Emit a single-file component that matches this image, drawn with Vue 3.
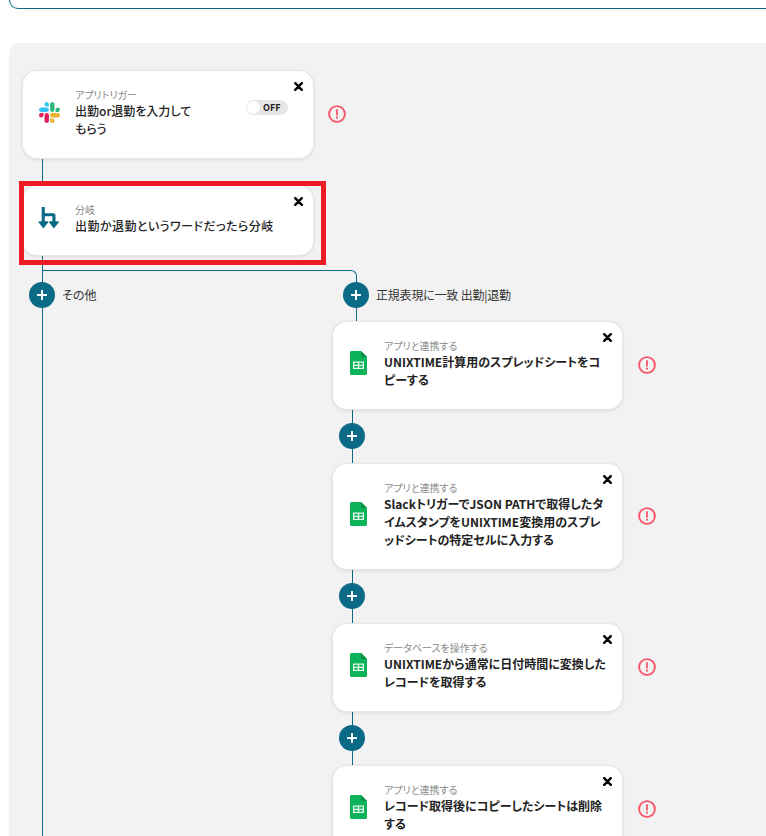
<script setup>
const triggerTitle = '出勤or退勤を入力して\nもらう'
const steps = [
  { label: 'アプリと連携する', title: 'UNIXTIME計算用のスプレッドシートをコ\nピーする' },
  { label: 'アプリと連携する', title: 'SlackトリガーでJSON PATHで取得したタ\nイムスタンプをUNIXTIME変換用のスプレ\nッドシートの特定セルに入力する' },
  { label: 'データベースを操作する', title: 'UNIXTIMEから通常に日付時間に変換した\nレコードを取得する' },
  { label: 'アプリと連携する', title: 'レコード取得後にコピーしたシートは削除\nする' }
]
</script>

<template>
  <div class="page">
    <div class="top-box"></div>
    <div class="panel">
      <div class="row">
        <div class="card">
          <div class="icon">
            <svg width="21" height="21" viewBox="0 0 122.8 122.8">
              <path d="M25.8 77.6c0 7.1-5.8 12.9-12.9 12.9S0 84.7 0 77.6s5.8-12.9 12.9-12.9h12.9v12.9z" fill="#E01E5A"/>
              <path d="M32.3 77.6c0-7.1 5.8-12.9 12.9-12.9s12.9 5.8 12.9 12.9v32.3c0 7.1-5.8 12.9-12.9 12.9s-12.9-5.8-12.9-12.9V77.6z" fill="#E01E5A"/>
              <path d="M45.2 25.8c-7.1 0-12.9-5.8-12.9-12.9S38.1 0 45.2 0s12.9 5.8 12.9 12.9v12.9H45.2z" fill="#36C5F0"/>
              <path d="M45.2 32.3c7.1 0 12.9 5.8 12.9 12.9s-5.8 12.9-12.9 12.9H12.9C5.8 58.1 0 52.3 0 45.2s5.8-12.9 12.9-12.9h32.3z" fill="#36C5F0"/>
              <path d="M97 45.2c0-7.1 5.8-12.9 12.9-12.9s12.9 5.8 12.9 12.9-5.8 12.9-12.9 12.9H97V45.2z" fill="#2EB67D"/>
              <path d="M90.5 45.2c0 7.1-5.8 12.9-12.9 12.9s-12.9-5.8-12.9-12.9V12.9C64.7 5.8 70.5 0 77.6 0s12.9 5.8 12.9 12.9v32.3z" fill="#2EB67D"/>
              <path d="M77.6 97c7.1 0 12.9 5.8 12.9 12.9s-5.8 12.9-12.9 12.9-12.9-5.8-12.9-12.9V97h12.9z" fill="#ECB22E"/>
              <path d="M77.6 90.5c-7.1 0-12.9-5.8-12.9-12.9s5.8-12.9 12.9-12.9h32.3c7.1 0 12.9 5.8 12.9 12.9s-5.8 12.9-12.9 12.9H77.6z" fill="#ECB22E"/>
            </svg>
          </div>
          <div class="text">
            <div class="label">アプリトリガー</div>
            <div class="title medium">{{ triggerTitle }}</div>
          </div>
          <div class="toggle"><span class="knob"></span><span class="off">OFF</span></div>
          <svg class="close" width="9" height="9" viewBox="0 0 9 9"><path d="M1.2 1.2l6.6 6.6M7.8 1.2L1.2 7.8" stroke="#000" stroke-width="2.4" stroke-linecap="round"/></svg>
        </div>
        <svg class="alert" width="18" height="18" viewBox="0 0 18 18"><circle cx="9" cy="9" r="7.900" fill="none" stroke="#f7566a" stroke-width="1.900"/><path d="M9 5v4.800" stroke="#f7566a" stroke-width="1.800" stroke-linecap="round"/><circle cx="9" cy="12.700" r="1.100" fill="#f7566a"/></svg>
      </div>
      <div class="line first"></div>
      <div class="card">
        <div class="icon">
          <svg width="24" height="24" viewBox="0 0 24 24" fill="#0b6a85" stroke-linejoin="round">
            <path d="M4.700 1h3.100v6.200h8.600c1.200 0 2.100.9 2.100 2.100V17h-3.100v-6.800H7.800V17H4.700z"/>
            <path d="M2.200 16h8.400l-4.200 5.400z" stroke="#0b6a85" stroke-width="1.400"/>
            <path d="M12.700 16h8.400l-4.200 5.400z" stroke="#0b6a85" stroke-width="1.400"/>
          </svg>
        </div>
        <div class="text">
          <div class="label">分岐</div>
          <div class="title medium wide">出勤か退勤というワードだったら分岐</div>
        </div>
        <svg class="close" width="9" height="9" viewBox="0 0 9 9"><path d="M1.2 1.2l6.6 6.6M7.8 1.2L1.2 7.8" stroke="#000" stroke-width="2.4" stroke-linecap="round"/></svg>
        <div class="highlight"></div>
      </div>
      <div class="line second"></div>
      <div class="branch-head"></div>
      <div class="branches">
        <div class="left-col">
          <div class="head">
            <span class="plus"></span>
            <span class="head-text">その他</span>
          </div>
          <div class="left-line"></div>
        </div>
        <div class="right-col">
          <div class="head shifted">
            <span class="plus"></span>
            <span class="head-text tight">正規表現に一致 出勤|退勤</span>
          </div>
          <div class="line to-card"></div>
          <template v-for="(s, i) in steps" :key="i">
            <div class="row">
              <div class="card step">
                <div class="icon sheet">
                  <svg width="17" height="24" viewBox="0 0 17 24">
                    <path d="M1.500 0H11l6 6v16.500a1.500 1.500 0 0 1-1.500 1.500h-14A1.500 1.500 0 0 1 0 22.500V1.500A1.500 1.500 0 0 1 1.500 0z" fill="#0cb358"/>
                    <path d="M11 0l6 6h-4.500A1.500 1.500 0 0 1 11 4.500z" fill="#0a8f47"/>
                    <path d="M3 10.500h11v7.500H3z" fill="#e6f7ed"/>
                    <path d="M4.300 11.800h3.500v1.900H4.300zM9.200 11.800h3.500v1.900H9.200zM4.300 14.900h3.500v1.900H4.300zM9.200 14.900h3.500v1.900H9.200z" fill="#0cb358"/>
                  </svg>
                </div>
                <div class="text">
                  <div class="label">{{ s.label }}</div>
                  <div class="title">{{ s.title }}</div>
                </div>
                <svg class="close" width="9" height="9" viewBox="0 0 9 9"><path d="M1.2 1.2l6.6 6.6M7.8 1.2L1.2 7.8" stroke="#000" stroke-width="2.4" stroke-linecap="round"/></svg>
              </div>
              <svg class="alert" width="18" height="18" viewBox="0 0 18 18"><circle cx="9" cy="9" r="7.900" fill="none" stroke="#f7566a" stroke-width="1.900"/><path d="M9 5v4.800" stroke="#f7566a" stroke-width="1.800" stroke-linecap="round"/><circle cx="9" cy="12.700" r="1.100" fill="#f7566a"/></svg>
            </div>
            <div v-if="i < steps.length - 1" class="connector">
              <div class="line seg-a"></div>
              <span class="plus"></span>
              <div class="line seg-b"></div>
            </div>
          </template>
        </div>
      </div>
    </div>
  </div>
</template>

<style>
html, body { margin: 0; background: #fff; overflow: hidden; }
</style>

<style scoped>
.page {
  width: 766px;
  height: 836px;
  overflow: hidden;
  background: #fff;
  font-family: "Noto Sans CJK JP", "Noto Sans", sans-serif;
  color: #222;
}
.top-box {
  height: 8px;
  margin-left: 9px;
  width: 800px;
  border: 1px solid #0b6a85;
  border-top: none;
  border-radius: 0 0 10px 10px;
  box-sizing: content-box;
}
.panel {
  margin-top: 34px;
  margin-left: 9px;
  width: 780px;
  height: 800px;
  padding: 28px 0 0 14px;
  box-sizing: border-box;
  background: #f2f2f2;
  border-radius: 10px 0 0 0;
}
.row {
  display: flex;
  align-items: center;
}
.card {
  position: relative;
  width: 290px;
  box-sizing: border-box;
  display: flex;
  align-items: center;
  padding: 16px 0 19.600px;
  background: #fff;
  border-radius: 14px;
  box-shadow: 0 0 0 1px #e6e6e6, 0 1px 4px rgba(0, 0, 0, 0.14);
}
.card.step { width: 289px; }
.icon {
  width: 52px;
  flex: none;
  display: flex;
  justify-content: center;
  margin-bottom: 1px;
}
.icon.sheet { width: 51px; padding-right: 1px; box-sizing: border-box; }
.icon svg { display: block; }
.text { flex: none; width: 228px; }
.label {
  font-size: 10px;
  line-height: 15px;
  color: #8a8a8a;
  font-feature-settings: "palt";
}
.title {
  font-size: 12px;
  line-height: 18px;
  font-weight: 700;
  color: #222;
  white-space: pre-line;
  font-feature-settings: "palt";
}
.title.medium { font-weight: 500; }
.title.wide { letter-spacing: 0.45px; }
.toggle {
  position: absolute;
  left: 223px;
  top: 29px;
  width: 42px;
  height: 15px;
  border-radius: 8px;
  background: #e6e6e6;
  display: flex;
  align-items: center;
}
.knob {
  width: 13px;
  height: 13px;
  margin-left: 1px;
  border-radius: 50%;
  background: #fff;
}
.off {
  margin-left: 3px;
  font-size: 9px;
  line-height: 15px;
  font-weight: 700;
  color: #222;
}
.close {
  position: absolute;
  right: 10px;
  top: 11px;
}
.alert {
  margin-left: 15px;
  margin-bottom: 1px;
  flex: none;
}
.card.step + .alert { margin-left: 16px; }
.highlight {
  position: absolute;
  left: -4px;
  top: -5px;
  width: 307px;
  height: 84px;
  box-sizing: border-box;
  border: 5px solid #ed1c24;
  pointer-events: none;
}
.line {
  width: 1px;
  background: #0b6a85;
}
.line.first { height: 28.400px; margin-left: 19px; }
.line.second { height: 15.400px; margin-left: 19px; }
.branch-head {
  margin-left: 19px;
  width: 313px;
  height: 11px;
  box-sizing: content-box;
  border-top: 1px solid #0b6a85;
  border-left: 1px solid #0b6a85;
  border-right: 1px solid #0b6a85;
  border-radius: 0 6px 0 0;
}
.branches {
  display: flex;
  margin-left: 6px;
}
.left-col {
  width: 304px;
  flex: none;
  display: flex;
  flex-direction: column;
}
.head {
  display: flex;
  align-items: center;
  gap: 7px;
  height: 26px;
}
.head.shifted { margin-left: 10px; }
.head-text {
  font-size: 12px;
  line-height: 26px;
  color: #333;
  font-feature-settings: "palt";
}
.head-text.tight { letter-spacing: -0.2px; }
.plus {
  position: relative;
  display: block;
  flex: none;
  width: 26px;
  height: 26px;
  border-radius: 50%;
  background: #0b6a85;
}
.plus::before, .plus::after {
  content: "";
  position: absolute;
  background: #fff;
  border-radius: 1px;
}
.plus::before { left: 8px; top: 12px; width: 10px; height: 2px; box-shadow: 0 0 0.5px #fff; }
.plus::after { left: 12px; top: 8px; width: 2px; height: 10px; box-shadow: 0 0 0.5px #fff; }
.left-line {
  width: 1px;
  height: 540px;
  margin-left: 13px;
  background: #0b6a85;
}
.right-col {
  flex: none;
  width: 340px;
}
.line.to-card { height: 14px; margin-left: 23px; }
.connector {
  margin-left: 6px;
  width: 26px;
  display: flex;
  flex-direction: column;
  align-items: center;
}
.line.seg-a { height: 14px; }
.line.seg-b { height: 15.400px; }
</style>
